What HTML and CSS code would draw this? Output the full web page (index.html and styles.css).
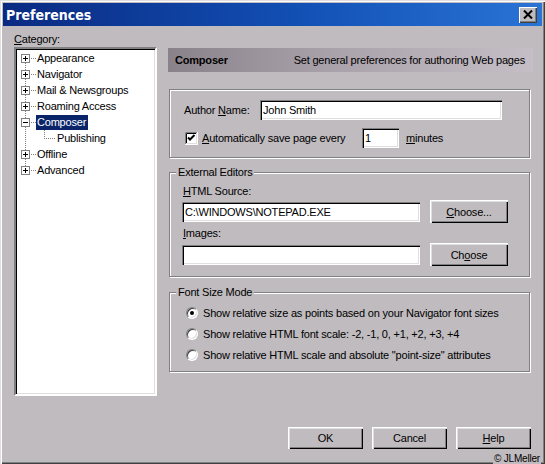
FILE: index.html
```html
<!DOCTYPE html>
<html lang="en">
<head>
<meta charset="UTF-8">
<title>Preferences</title>
<link rel="stylesheet" href="styles.css">
</head>
<body>

<div class="window">
  <div class="titlebar">
    <span class="title">Preferences</span>
    <span class="close-btn">
      <svg width="10" height="9" viewBox="0 0 10 9"><path d="M1 0.5L9 8.5M9 0.5L1 8.5" stroke="#000" stroke-width="2"/></svg>
    </span>
  </div>

  <div class="content">
    <div class="sidebar">
      <div class="cat-label"><u>C</u>ategory:</div>
      <ul class="tree">
        <li class="node"><svg class="twig" width="15" height="9"><rect x="0.5" y="0.5" width="8" height="8" fill="#fff" stroke="#808080"/><path d="M2 4.5H7M4.5 2V7" stroke="#000"/><path d="M10 4.5H15" stroke="#808080" stroke-dasharray="1 1"/></svg><span class="node-text">Appearance</span></li>
        <li class="node"><svg class="twig" width="15" height="9"><rect x="0.5" y="0.5" width="8" height="8" fill="#fff" stroke="#808080"/><path d="M2 4.5H7M4.5 2V7" stroke="#000"/><path d="M10 4.5H15" stroke="#808080" stroke-dasharray="1 1"/></svg><span class="node-text">Navigator</span></li>
        <li class="node"><svg class="twig" width="15" height="9"><rect x="0.5" y="0.5" width="8" height="8" fill="#fff" stroke="#808080"/><path d="M2 4.5H7M4.5 2V7" stroke="#000"/><path d="M10 4.5H15" stroke="#808080" stroke-dasharray="1 1"/></svg><span class="node-text">Mail &amp; Newsgroups</span></li>
        <li class="node"><svg class="twig" width="15" height="9"><rect x="0.5" y="0.5" width="8" height="8" fill="#fff" stroke="#808080"/><path d="M2 4.5H7M4.5 2V7" stroke="#000"/><path d="M10 4.5H15" stroke="#808080" stroke-dasharray="1 1"/></svg><span class="node-text">Roaming Access</span></li>
        <li class="node"><svg class="twig" width="15" height="9"><rect x="0.5" y="0.5" width="8" height="8" fill="#fff" stroke="#808080"/><path d="M2 4.5H7" stroke="#000"/><path d="M10 4.5H15" stroke="#808080" stroke-dasharray="1 1"/></svg><span class="node-text selected">Composer</span></li>
        <li class="node leaf"><svg class="twig" width="16" height="16"><path d="M4.5 -2V8.5H16" stroke="#808080" stroke-dasharray="1 1" fill="none"/></svg><span class="node-text">Publishing</span></li>
        <li class="node"><svg class="twig" width="15" height="9"><rect x="0.5" y="0.5" width="8" height="8" fill="#fff" stroke="#808080"/><path d="M2 4.5H7M4.5 2V7" stroke="#000"/><path d="M10 4.5H15" stroke="#808080" stroke-dasharray="1 1"/></svg><span class="node-text">Offline</span></li>
        <li class="node"><svg class="twig" width="15" height="9"><rect x="0.5" y="0.5" width="8" height="8" fill="#fff" stroke="#808080"/><path d="M2 4.5H7M4.5 2V7" stroke="#000"/><path d="M10 4.5H15" stroke="#808080" stroke-dasharray="1 1"/></svg><span class="node-text">Advanced</span></li>
      </ul>
    </div>

    <div class="panel">
      <div class="panel-header">
        <b>Composer</b>
        <span>Set general preferences for authoring Web pages</span>
      </div>

      <div class="group group-author">
        <div class="row">
          <span class="author-label">Author <u>N</u>ame:</span>
          <span class="field author-field">John Smith</span>
        </div>
        <div class="row row-save">
          <svg class="checkbox" width="13" height="13" viewBox="0 0 13 13">
            <rect width="13" height="13" fill="#fff"/>
            <path d="M0.5 12V0.5H12" stroke="#808080" fill="none"/>
            <path d="M1.5 11V1.5H11" stroke="#000" fill="none"/>
            <path d="M1 11.5H11.5V1" stroke="#dfdfdf" fill="none"/>
            <path d="M0 12.5H12.5V0" stroke="#fff" fill="none"/>
            <path d="M3 5.5L5 7.5L9.5 3" stroke="#000" stroke-width="2" fill="none"/>
          </svg>
          <span class="save-label"><u>A</u>utomatically save page every</span>
          <span class="field minutes-field">1</span>
          <span class="minutes-label"><u>m</u>inutes</span>
        </div>
      </div>

      <div class="group group-editors">
        <span class="legend">External Editors</span>
        <div class="field-label"><u>H</u>TML Source:</div>
        <div class="row">
          <span class="field path-field">C:\WINDOWS\NOTEPAD.EXE</span>
          <span class="btn choose-btn"><u>C</u>hoose...</span>
        </div>
        <div class="field-label second"><u>I</u>mages:</div>
        <div class="row row-images">
          <span class="field path-field"></span>
          <span class="btn choose-btn">Ch<u>o</u>ose</span>
        </div>
      </div>

      <div class="group group-font">
        <span class="legend">Font Size Mode</span>
        <div class="radio-row"><span class="radio checked"></span>Show relative size as points based on your Navigator font sizes</div>
        <div class="radio-row"><span class="radio"></span>Show relative HTML font scale: -2, -1, 0, +1, +2, +3, +4</div>
        <div class="radio-row"><span class="radio"></span>Show relative HTML scale and absolute "point-size" attributes</div>
      </div>

      <div class="dialog-buttons">
        <span class="btn">OK</span>
        <span class="btn">Cancel</span>
        <span class="btn"><u>H</u>elp</span>
      </div>
    </div>
  </div>

  <div class="credit">© JLMeller</div>
</div>

</body>
</html>
```

FILE: styles.css
```css
html, body {
  margin: 0;
  padding: 0;
}
body {
  font-family: 'Liberation Sans', Arial, sans-serif;
  font-size: 11px;
  letter-spacing: -0.2px;
  color: #000;
  background: #bfbbbf;
  width: 545px;
  height: 464px;
  overflow: hidden;
}
u {
  text-decoration: underline;
  text-underline-offset: 1px;
}

/* window frame */
.window {
  position: relative;
  box-sizing: border-box;
  width: 545px;
  height: 464px;
  padding: 3px;
  background: #bfbbbf;
  box-shadow: inset 1px 1px #dfdfdf, inset 2px 2px #fff,
              inset -1px -1px #404040, inset -2px -2px #808080;
}
.titlebar {
  height: 23px;
  display: flex;
  align-items: center;
  justify-content: space-between;
  padding: 0 5px 0 3px;
  background: linear-gradient(to right, #0a2a82 0%, #1250b4 55%, #2a74d6 100%);
}
.title {
  font-family: 'DejaVu Sans Condensed', 'DejaVu Sans', Verdana, sans-serif;
  font-stretch: condensed;
  font-weight: bold;
  font-size: 14px;
  letter-spacing: 0;
  color: #fff;
}
.close-btn {
  width: 18px;
  height: 16px;
  display: flex;
  align-items: center;
  justify-content: center;
  background: #bfbbbf;
  box-shadow: inset 1px 1px #fff, inset -1px -1px #404040, inset -2px -2px #808080;
}

/* layout */
.content {
  display: flex;
  padding: 0 9px 0 11px;
}
.sidebar {
  width: 143px;
  padding-top: 7px;
}
.cat-label {
  height: 14px;
  line-height: 13px;
}
.tree {
  position: relative;
  list-style: none;
  margin: 0;
  box-sizing: border-box;
  height: 349px;
  padding: 1px 0 0 0;
  border: 2px solid;
  border-color: #808080 #fff #fff #808080;
  box-shadow: inset 1px 1px #000, inset -1px -1px #dfdfdf;
  background: #fff;
}
.tree::before {  /* root dotted line */
  content: "";
  position: absolute;
  left: 9px;
  top: 9px;
  height: 112px;
  border-left: 1px dotted #808080;
}
.node {
  position: relative;
  height: 16px;
  display: flex;
  align-items: center;
  padding-left: 5px;
}
.twig {
  position: relative;
  flex-shrink: 0;
  shape-rendering: crispEdges;
}
.node-text {
  padding: 1px 2px 1px 1px;
  line-height: 13px;
}
.node-text.selected {
  background: #0a246a;
  color: #fff;
}
.leaf {
  padding-left: 24px;
}

.panel {
  width: 365px;
  margin-left: 11px;
  padding-top: 22px;
}
.panel-header {
  height: 24px;
  display: flex;
  align-items: center;
  justify-content: space-between;
  padding: 0 8px 0 7px;
  background: linear-gradient(to right, #8a828a 0%, #aaa2aa 45%, #c6bec6 100%);
}
.panel-header b {
  font-weight: bold;
}

/* group boxes */
.group {
  position: relative;
  width: 361px;
  box-sizing: border-box;
  margin-left: 1px;
  border: 1px solid #808080;
  box-shadow: inset 1px 1px #fff, 1px 1px #fff;
}
.legend {
  position: absolute;
  top: -7px;
  left: 6px;
  padding: 0 2px;
  line-height: 13px;
  background: #bfbbbf;
}
.row {
  display: flex;
  align-items: center;
}
.field {
  box-sizing: border-box;
  height: 20px;
  line-height: 16px;
  padding: 2px 3px;
  background: #fff;
  white-space: nowrap;
  box-shadow: inset 1px 1px #808080, inset 2px 2px #000,
              inset -1px -1px #fff, inset -2px -2px #dfdfdf;
}

.group-author {
  margin-top: 17px;
  height: 69px;
  padding: 10px 0 0 14px;
}
.author-label {
  width: 76px;
}
.author-field {
  width: 242px;
}
.row-save {
  margin-top: 8px;
}
.checkbox {
  margin-left: 1px;
  flex-shrink: 0;
}
.save-label {
  width: 160px;
  margin-left: 4px;
}
.minutes-field {
  width: 37px;
}
.minutes-label {
  margin-left: 7px;
}

.group-editors {
  margin-top: 14px;
  height: 105px;
  padding: 12px 0 0 12px;
}
.field-label {
  line-height: 13px;
  height: 13px;
  margin-left: 1px;
}
.field-label.second {
  margin-top: 4px;
}
.group-editors .row {
  margin-top: 2px;
  height: 23px;
}
.group-editors .row-images {
  margin-top: 3px;
}
.path-field {
  width: 238px;
}
.btn {
  box-sizing: border-box;
  display: flex;
  align-items: center;
  justify-content: center;
  width: 75px;
  height: 22px;
  background: #bfbbbf;
  box-shadow: inset 1px 1px #fff, inset 2px 2px #dfdfdf,
              inset -1px -1px #000, inset -2px -2px #808080;
}
.choose-btn {
  width: 78px;
  height: 23px;
  margin-left: 10px;
}

.group-font {
  margin-top: 15px;
  height: 80px;
  padding: 9px 0 0 16px;
}
.radio-row {
  display: flex;
  align-items: center;
  height: 21px;
}
.radio {
  position: relative;
  box-sizing: border-box;
  width: 12px;
  height: 12px;
  margin-right: 5px;
  border-radius: 50%;
  border: 1px solid;
  border-color: #808080 #fff #fff #808080;
  background: #fff;
  box-shadow: inset 1px 1px #404040, inset -1px -1px #dfdfdf;
}
.radio.checked::after {
  content: "";
  position: absolute;
  left: 3px;
  top: 3px;
  width: 4px;
  height: 4px;
  border-radius: 50%;
  background: #000;
}

.dialog-buttons {
  display: flex;
  justify-content: flex-end;
  gap: 9px;
  margin-top: 55px;
  padding-right: 2px;
}

.credit {
  position: absolute;
  right: 4px;
  bottom: 0;
  font-size: 10px;
  line-height: 11px;
  padding: 0 1px;
  background: #bfbbbf;
}
```
